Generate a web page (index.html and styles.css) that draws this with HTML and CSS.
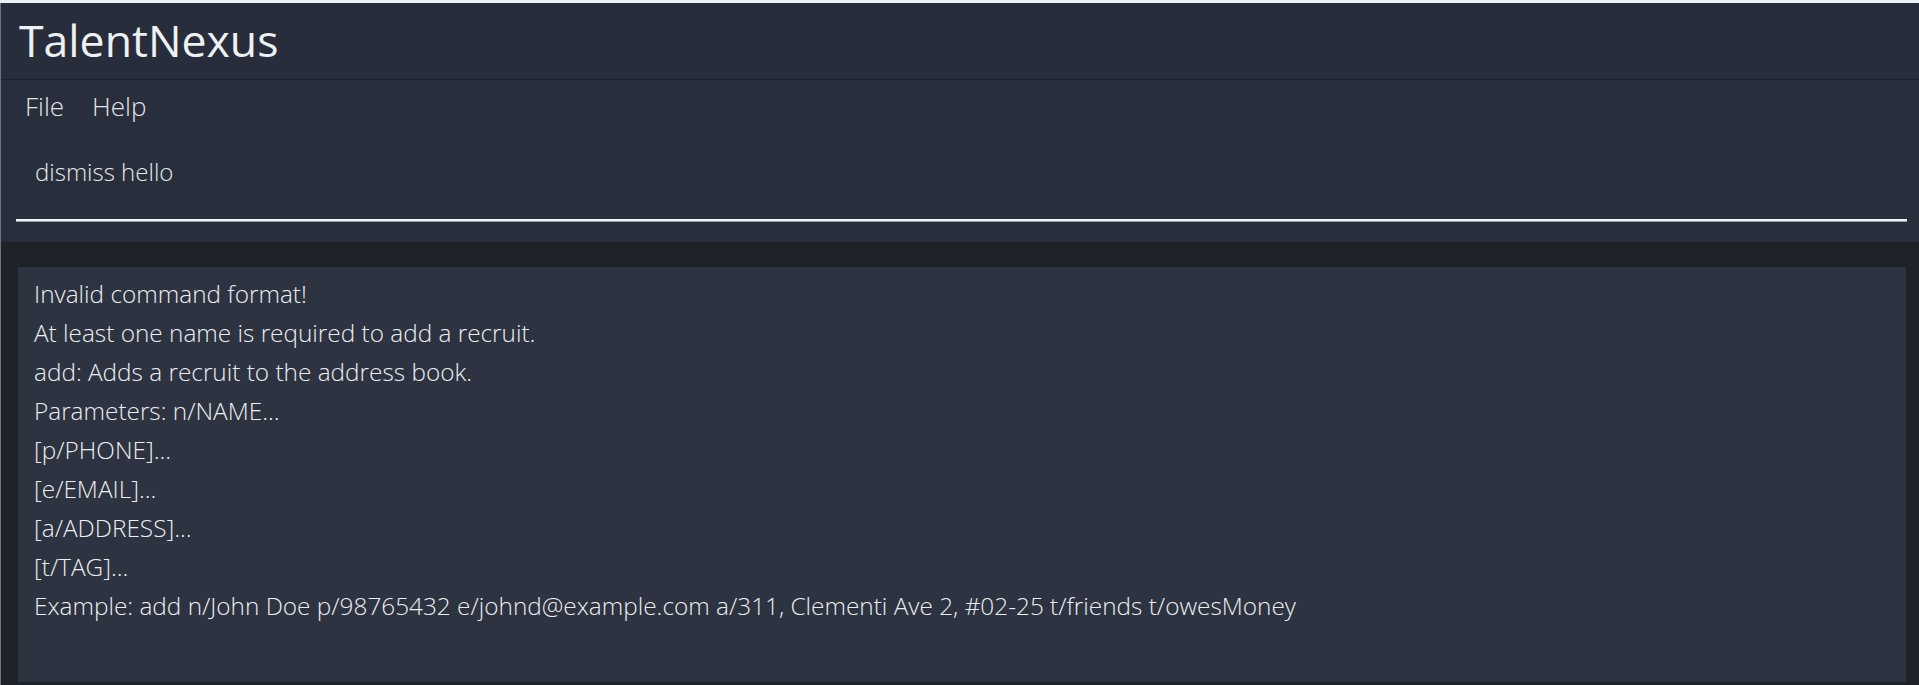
FILE: index.html
```html
<!DOCTYPE html>
<html>
<head>
<meta charset="utf-8">
<link rel="stylesheet" href="styles.css">
</head>
<body>
<div class="topstrip"></div>
<div class="window">
  <header class="titlebar"><span class="title">TalentNexus</span></header>
  <section class="upper">
    <nav class="menubar"><span class="menu">File</span><span class="menu">Help</span></nav>
    <div class="command">
      <div class="command-text">dismiss hello</div>
      <div class="command-line"></div>
    </div>
  </section>
  <section class="lower">
    <div class="result">
      <div class="line">Invalid command format!</div>
      <div class="line">At least one name is required to add a recruit.</div>
      <div class="line">add: Adds a recruit to the address book.</div>
      <div class="line">Parameters: n/NAME...</div>
      <div class="line">[p/PHONE]...</div>
      <div class="line">[e/EMAIL]...</div>
      <div class="line">[a/ADDRESS]...</div>
      <div class="line">[t/TAG]...</div>
      <div class="line">Example: add n/John Doe p/98765432 e/johnd@example.com a/311, Clementi Ave 2, #02-25 t/friends t/owesMoney</div>
    </div>
  </section>
</div>
</body>
</html>
```
FILE: styles.css
```css
html, body {
  margin: 0;
  padding: 0;
  height: 685px;
  overflow: hidden;
  background: #1e232a;
  font-family: "Open Sans", "Noto Sans", sans-serif;
}
.topstrip {
  height: 3px;
  background: #eef1f6;
}
.window {
  border-left: 1px solid #6f747c;
  height: 682px;
  display: flex;
  flex-direction: column;
}
.titlebar {
  height: 76px;
  background: #272d3a;
  border-bottom: 1px solid #1c2129;
  display: flex;
  align-items: center;
  padding-left: 18px;
}
.title {
  font-size: 44.6px;
  color: #eef0f2;
  font-weight: 400;
  line-height: 1;
  margin-top: -2px;
}
.upper {
  background: #282e3b;
  height: 162px;
  display: flex;
  flex-direction: column;
}
.menubar {
  display: flex;
  gap: 28px;
  padding: 4px 0 0 24px;
  height: 44px;
  align-items: center;
}
.menu {
  font-size: 26px;
  font-weight: 300;
  color: #e2e4e8;
}
.command {
  padding: 0 12px 0 15px;
}
.command-text {
  font-size: 24px;
  font-weight: 300;
  color: #e6e8ec;
  padding: 27px 0 0 19px;
  height: 33px;
  line-height: 33px;
}
.command-line {
  margin-top: 31px;
  height: 2px;
  background: #f2f2f2;
  box-shadow: 0 1px 0 #9aa0a8;
}
.lower {
  flex: 1;
  background: #1e232a;
  padding: 25px 13px 0 17px;
}
.result {
  background: #2d3340;
  height: 415px;
  padding: 7px 16px 0 16px;
  box-sizing: border-box;
}
.line {
  font-size: 24.35px;
  font-weight: 300;
  line-height: 39px;
  color: #eceef2;
  white-space: nowrap;
}
```
